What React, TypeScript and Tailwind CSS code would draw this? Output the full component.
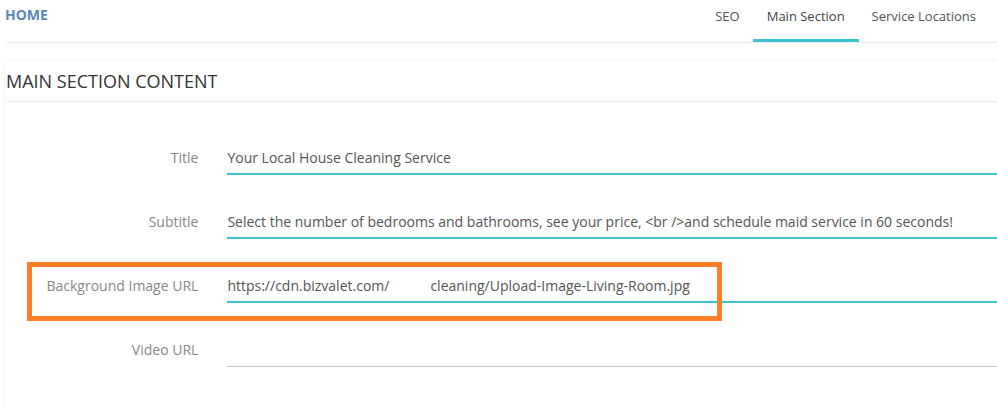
import React from 'react';

const rows = [
  { label: 'Title', value: 'Your Local House Cleaning Service', active: true },
  {
    label: 'Subtitle',
    value: 'Select the number of bedrooms and bathrooms, see your price, <br />and schedule maid service in 60 seconds!',
    active: true,
  },
  { label: 'Background Image URL', value: 'url', active: true },
  { label: 'Video URL', value: '', active: false },
];

export default function App() {
  return (
    <div className="relative flex h-[406px] w-[997px] flex-col overflow-hidden bg-white font-['Open_Sans',sans-serif]">
      {/* header with tabs */}
      <div className="ml-[5px] flex h-[43px] shrink-0 items-start justify-between border-b border-[#eeeeee]">
        <div className="pt-[5px] text-[14px] font-bold leading-[20px] text-[#5b87b8]">HOME</div>
        <div className="mr-[8px] flex">
          <div className="h-[42px] px-[13px] pt-[6px] text-[13px] leading-[20px] text-[#555]">SEO</div>
          <div className="h-[42px] border-b-[3px] border-[#3ac2d0] px-[14px] pt-[6px] text-[13px] leading-[20px] text-[#444]">
            Main Section
          </div>
          <div className="h-[42px] px-[13px] pt-[6px] text-[13px] leading-[20px] text-[#555]">Service Locations</div>
        </div>
      </div>

      {/* panel */}
      <div className="ml-[4px] mt-[17px] flex-1 border-l border-t border-[#f4f4f4]">
        <div className="flex h-[41px] items-center border-b border-[#eeeeee] pl-[1px] text-[18px] leading-[24px] text-[#333]">
          MAIN SECTION CONTENT
        </div>
        <div className="flex flex-col gap-[30px] pt-[39px]">
          {rows.map((r) => (
            <div key={r.label} className="flex items-center">
              <div className="w-[196px] text-right text-[14px] leading-[20px] text-[#888]">{r.label}</div>
              <div
                className={
                  r.active
                    ? 'ml-[29px] h-[34px] w-[780px] border-b-2 border-[#3ac2d0] pt-[7px] text-[14px] leading-[20px] text-[#555]'
                    : 'ml-[29px] h-[34px] w-[780px] border-b border-[#c5cad2] pt-[7px] text-[14px] leading-[20px] text-[#555]'
                }
              >
                {r.value === 'url' ? (
                  <span>
                    https://cdn.bizvalet.com/
                    <span className="inline-block w-[41px]" />
                    cleaning/Upload-Image-Living-Room.jpg
                  </span>
                ) : (
                  r.value
                )}
              </div>
            </div>
          ))}
        </div>
      </div>

      {/* annotation box */}
      <div className="absolute left-[27px] top-[262px] h-[59px] w-[695px] border-[5px] border-[#ff7f27]" />
    </div>
  );
}
